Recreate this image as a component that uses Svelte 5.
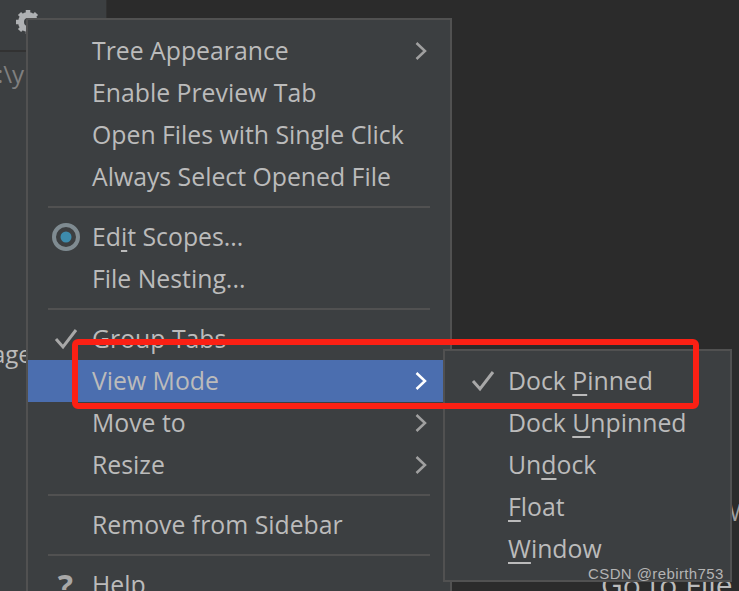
<script>
  const mainGroups = [
    [
      { label: "Tree Appearance", arrow: true },
      { label: "Enable Preview Tab" },
      { label: "Open Files with Single Click" },
      { label: "Always Select Opened File" },
    ],
    [
      { parts: ["Ed", "i", "t Scopes..."], icon: "radio" },
      { label: "File Nesting..." },
    ],
    [
      { label: "Group Tabs", icon: "check" },
      { label: "View Mode", arrow: true, active: true },
      { label: "Move to", arrow: true },
      { label: "Resize", arrow: true },
    ],
    [{ label: "Remove from Sidebar" }],
    [{ label: "Help", icon: "help" }],
  ];

  const viewModes = [
    { parts: ["Dock ", "P", "inned"], icon: "check" },
    { parts: ["Dock ", "U", "npinned"] },
    { parts: ["Un", "d", "ock"] },
    { parts: ["", "F", "loat"] },
    { parts: ["", "W", "indow"] },
  ];
</script>

{#snippet row(item)}
  <div class="row" class:active={item.active}>
    <span class="icon">
      {#if item.icon === "check"}
        <svg width="26" height="26" viewBox="0 0 26 26"><path d="M3 13 L10 21 L23 4" fill="none" stroke="#a8a8a8" stroke-width="3"/></svg>
      {:else if item.icon === "radio"}
        <svg width="28" height="28" viewBox="0 0 28 28"><circle cx="14" cy="14" r="12" fill="none" stroke="#7f8b91" stroke-width="4"/><circle cx="14" cy="14" r="5.500" fill="#3d8bac"/></svg>
      {:else if item.icon === "help"}
        <span class="help">?</span>
      {/if}
    </span>
    <span class="label">
      {#if item.parts}{item.parts[0]}<u>{item.parts[1]}</u>{item.parts[2]}{:else}{item.label}{/if}
    </span>
    {#if item.arrow}
      <svg class="arrow" width="14" height="22" viewBox="0 0 14 22"><path d="M2.500 3 L11 11 L2.500 19" fill="none" stroke={item.active ? "#ffffff" : "#a0a0a0"} stroke-width="2.500"/></svg>
    {/if}
  </div>
{/snippet}

<div class="screen">
  <aside class="sidebar">
    <div class="toolbar">
      <svg class="gear" width="30" height="30" viewBox="0 0 30 30">
        <circle cx="13" cy="13" r="7" fill="none" stroke="#afb1b3" stroke-width="6"/>
        <path d="M13 1v5M13 20v5M1 13h5M20 13h5M4.500 4.500l3.500 3.500M18 18l3.500 3.500M21.500 4.500L18 8M8 18l-3.500 3.500" stroke="#afb1b3" stroke-width="4.500"/>
      </svg>
    </div>
    <div class="path">:\y</div>
    <div class="page">age</div>
  </aside>
  <main class="editor">
    <div class="side-letter">W</div>
    <div class="goto">Go to File</div>
  </main>

  <div class="menu main-menu">
    {#each mainGroups as group, i}
      {#if i > 0}<div class="sep"></div>{/if}
      {#each group as item}
        {@render row(item)}
      {/each}
    {/each}
  </div>

  <div class="menu sub-menu">
    {#each viewModes as item}
      {@render row(item)}
    {/each}
  </div>

  <div class="highlight"></div>
  <div class="watermark">CSDN @rebirth753</div>
</div>

<style>
  :global(body) {
    margin: 0;
    background: #2b2b2b;
  }
  .screen {
    position: relative;
    display: flex;
    width: 739px;
    height: 591px;
    overflow: hidden;
    font-family: "Open Sans", "Noto Sans", sans-serif;
    color: #bbbbbb;
  }
  .sidebar {
    position: relative;
    width: 106px;
    background: #3c3f41;
    border-right: 1px solid #323232;
    flex: none;
  }
  .toolbar {
    height: 52px;
    border-bottom: 2px solid #323232;
    box-sizing: border-box;
  }
  .gear {
    margin: 9px 0 0 15px;
  }
  .path {
    position: absolute;
    left: -3px;
    top: 57px;
    font-size: 24px;
    color: #808080;
  }
  .page {
    position: absolute;
    left: -8px;
    top: 337px;
    font-size: 24px;
  }
  .editor {
    flex: 1;
    position: relative;
    background: #2b2b2b;
  }
  .side-letter {
    position: absolute;
    left: 622px;
    top: 495px;
    font-size: 24px;
    color: #a0a0a0;
  }
  .goto {
    position: absolute;
    left: 494px;
    top: 564px;
    font-size: 30px;
    color: #bbbbbb;
  }
  .menu {
    position: absolute;
    box-sizing: border-box;
    background: #3c3f41;
    border: 2px solid #515151;
  }
  .main-menu {
    left: 26px;
    top: 18px;
    width: 426px;
    padding-top: 10px;
  }
  .sub-menu {
    left: 443px;
    top: 349px;
    width: 289px;
    height: 233px;
    padding-top: 9px;
  }
  .row {
    display: flex;
    align-items: center;
    height: 42px;
    font-size: 24.8px;
    white-space: nowrap;
  }
  .row.active {
    background: #4b6eaf;
  }
  .icon {
    display: flex;
    align-items: center;
    justify-content: center;
    box-sizing: border-box;
    width: 64px;
    padding-left: 11px;
    flex: none;
  }
  .label {
    flex: 1;
    margin-top: -2px;
  }
  .sub-menu .label {
    margin-left: -1px;
  }
  u {
    text-underline-offset: 4px;
    text-decoration-thickness: 2px;
  }
  .arrow {
    margin-right: 22px;
  }
  .help {
    font-size: 32px;
    font-weight: 700;
    color: #a8a8a8;
  }
  .sep {
    height: 2px;
    margin: 8px 20px;
    background: #515151;
  }
  .highlight {
    position: absolute;
    left: 72px;
    top: 339px;
    width: 627px;
    height: 70px;
    box-sizing: border-box;
    border: 6px solid #fb2014;
    border-radius: 6px;
  }
  .watermark {
    position: absolute;
    left: 588px;
    top: 565px;
    font-family: "Liberation Sans", sans-serif;
    font-size: 15px;
    letter-spacing: 0.4px;
    color: #b4b4b4;
  }
</style>
